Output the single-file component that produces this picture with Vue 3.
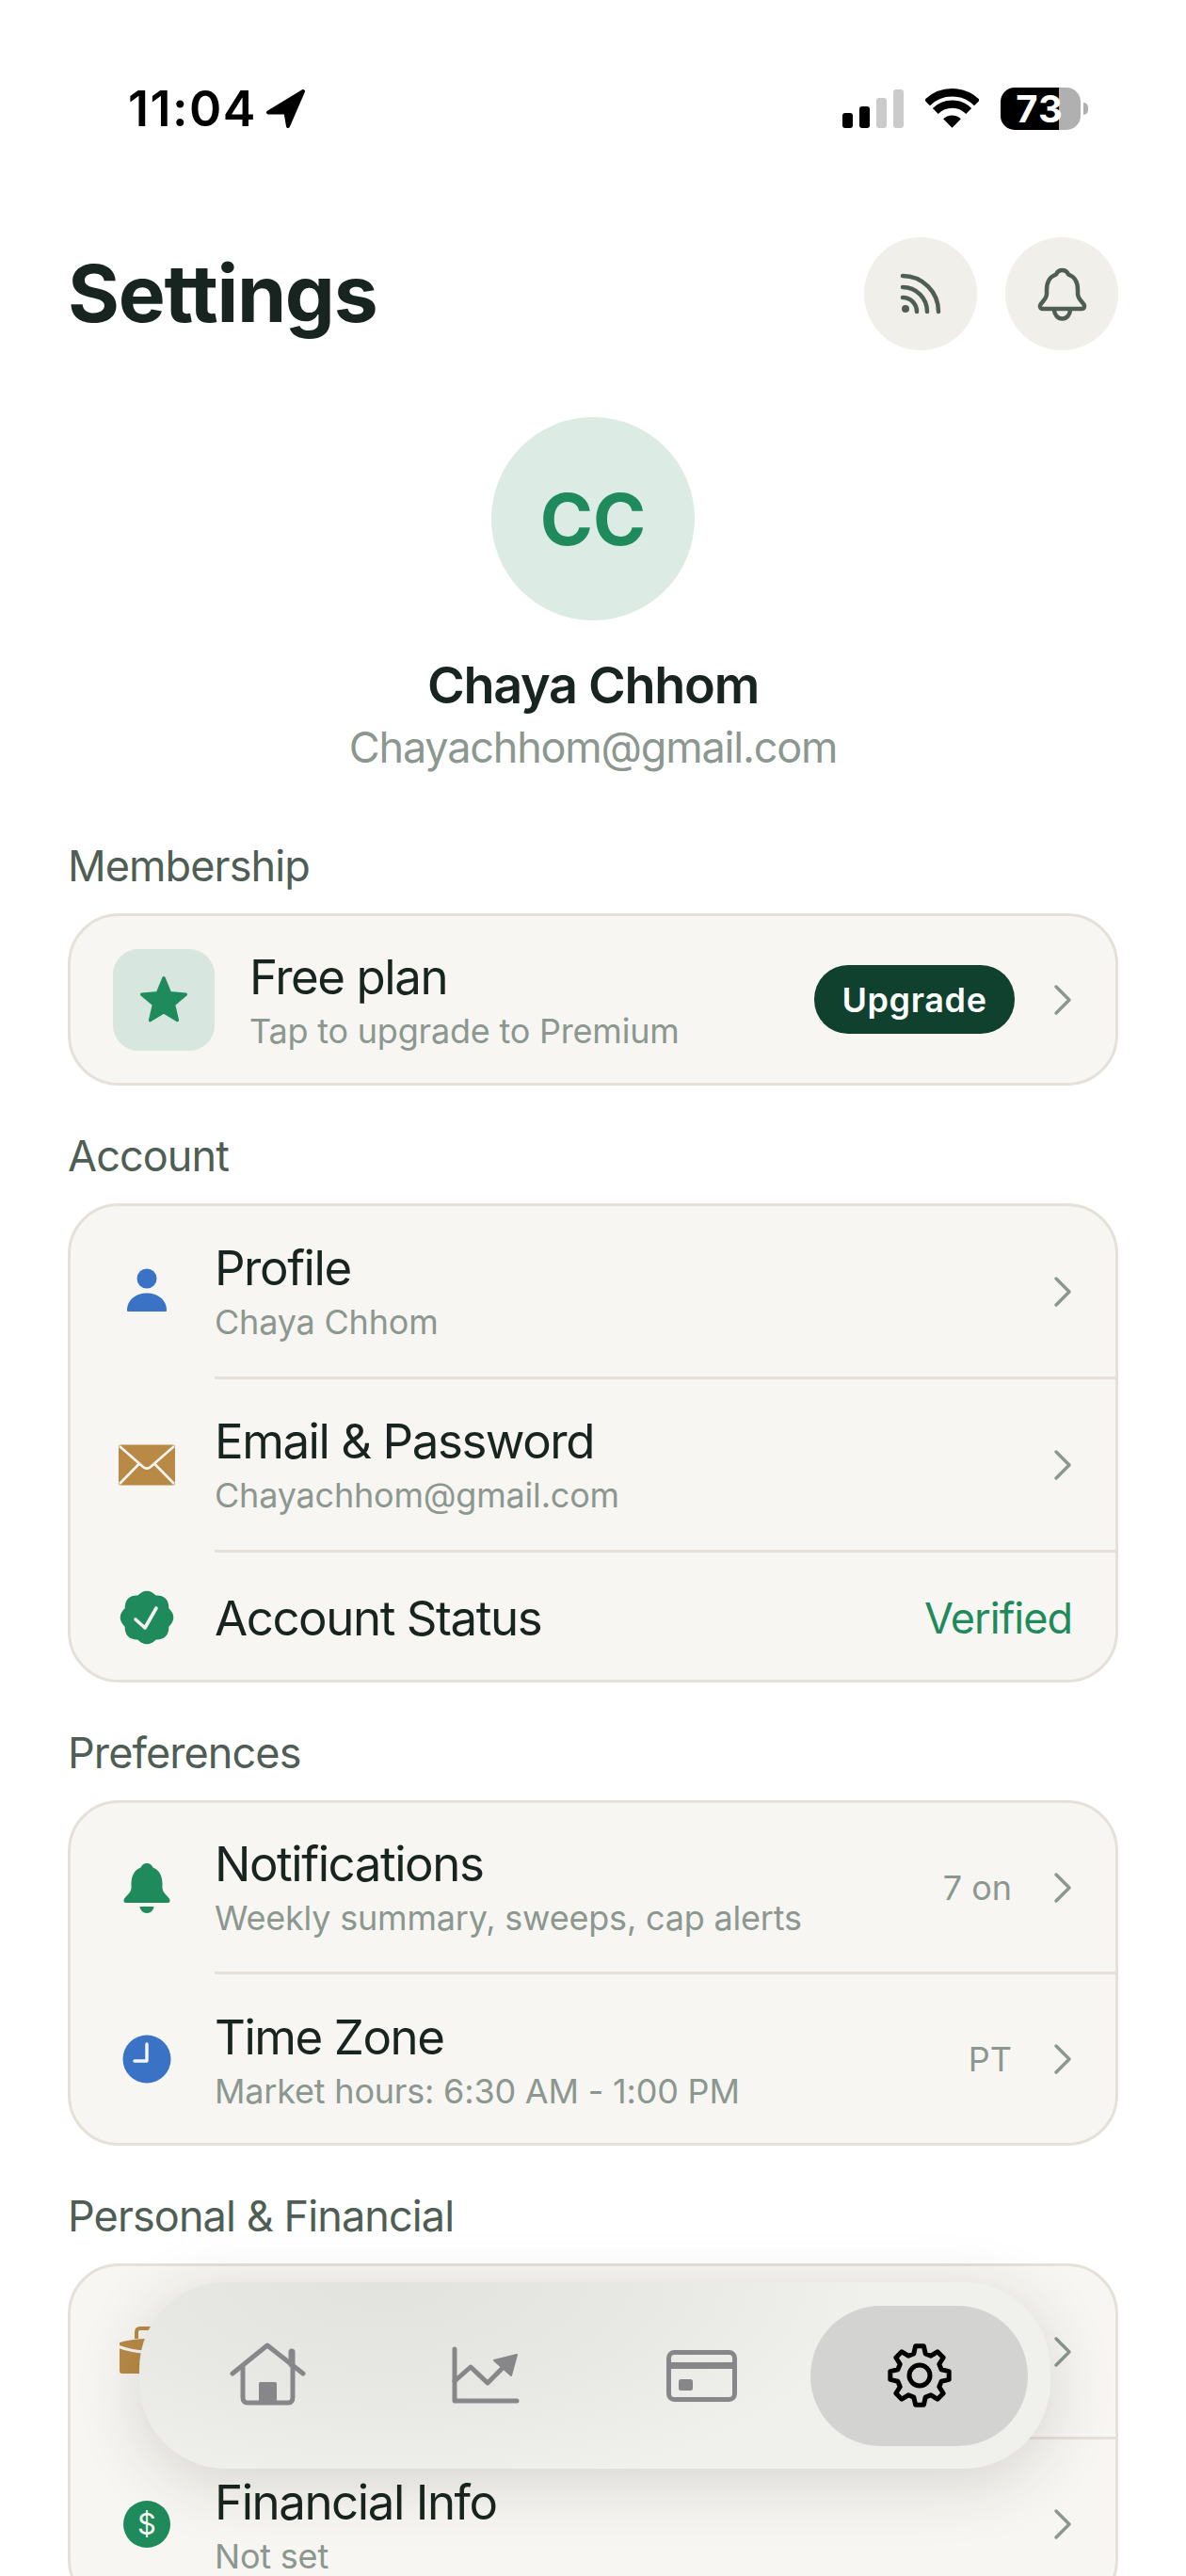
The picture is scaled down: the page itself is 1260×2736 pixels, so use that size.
<script setup>
function rad(deg) {
  return ((deg - 90) * Math.PI) / 180
}
function at(cx, cy, r, deg) {
  return `${(cx + r * Math.cos(rad(deg))).toFixed(2)} ${(cy + r * Math.sin(rad(deg))).toFixed(2)}`
}
function gearPath(cx, cy, R, r, n) {
  const pts = []
  for (let i = 0; i < n; i++) {
    const a = (i * 360) / n
    for (const [d, len] of [[-15, r], [-8, R], [8, R], [15, r]]) {
      pts.push(at(cx, cy, len, a + d))
    }
  }
  return 'M' + pts.join('L') + 'Z'
}
function badgePath(cx, cy, notch, peak, n) {
  const step = 360 / n
  let d = 'M' + at(cx, cy, notch, -step / 2)
  for (let i = 0; i < n; i++) {
    d += `Q${at(cx, cy, peak, i * step)} ${at(cx, cy, notch, i * step + step / 2)}`
  }
  return d + 'Z'
}
const gear = gearPath(45, 45, 31.5, 24, 8)
const badge = badgePath(33, 33, 24.5, 32.5, 8)
</script>

<template>
  <div class="page">
    <div class="status">
      <div class="time-wrap">
        <span class="time">11:04</span>
        <svg class="loc" viewBox="0 0 43 41"><path d="M40 2 3 24.5H21.5L24 39Z" fill="#000" stroke="#000" stroke-width="4" stroke-linejoin="round" /></svg>
      </div>
      <div class="status-right">
        <div class="signal">
          <i class="bar b1"></i><i class="bar b2"></i><i class="bar b3 off"></i><i class="bar b4 off"></i>
        </div>
        <svg class="wifi" viewBox="0 0 57 43" fill="none" stroke="#000" stroke-width="8.4">
          <path d="M2 15.2A37.5 37.5 0 0 1 55 15.2" />
          <path d="M10.8 24A25 25 0 0 1 46.2 24" />
          <path d="M28.5 41.7 19.1 32.3A13.3 13.3 0 0 1 37.9 32.3Z" fill="#000" stroke="none" />
        </svg>
        <div class="battery"><span>73</span></div>
      </div>
    </div>

    <header class="header">
      <h1>Settings</h1>
      <div class="header-btns">
        <button class="round">
          <svg viewBox="0 0 120 120" fill="none" stroke="#4f5e55" stroke-width="4.5" stroke-linecap="round">
            <path d="M41 41A38 38 0 0 1 79 79" />
            <path d="M41 53A26 26 0 0 1 67 79" />
            <path d="M41 64A15 15 0 0 1 56 79" />
            <circle cx="44" cy="76" r="4" fill="#4f5e55" stroke="none" />
          </svg>
        </button>
        <button class="round">
          <svg viewBox="0 0 120 120" fill="none" stroke="#4f5e55" stroke-width="4.5" stroke-linejoin="round">
            <path d="M60.5 35C57.5 35 55 37 54 39.5 47 42 44 48 44 56V60C44 66 38 69 37 72.5 36.7 74.5 37.5 76 39.5 76H81.5C83.5 76 84.3 74.5 84 72.5 83 69 77 66 77 60V56C77 48 74 42 67 39.5 66 37 63.5 35 60.5 35Z" />
            <path d="M52 77A8.5 9.5 0 0 0 69 77" />
          </svg>
        </button>
      </div>
    </header>

    <section class="profile">
      <div class="avatar">CC</div>
      <div class="name">Chaya Chhom</div>
      <div class="email">Chayachhom@gmail.com</div>
    </section>

    <section class="section first">
      <div class="label">Membership</div>
      <div class="card plan">
        <div class="plan-icon">
          <svg viewBox="0 0 54 54"><path d="M27 6 33 20.5 48 21.7 36.5 31.5 40 46.5 27 38.5 14 46.5 17.5 31.5 6 21.7 21 20.5Z" fill="#1f8a5b" stroke="#1f8a5b" stroke-width="3" stroke-linejoin="round" /></svg>
        </div>
        <div class="text">
          <div class="title">Free plan</div>
          <div class="sub">Tap to upgrade to Premium</div>
        </div>
        <span class="upgrade">Upgrade</span>
        <svg class="chev" viewBox="0 0 20 34"><polyline points="3,3 17,17 3,31" /></svg>
      </div>
    </section>

    <section class="section">
      <div class="label">Account</div>
      <div class="card">
        <div class="row">
          <svg class="ico" viewBox="0 0 66 66"><circle cx="33" cy="18" r="10.5" fill="#3a72c6" /><path d="M12 51.5C12 41 21 33.5 33 33.5S54 41 54 51.5C54 52.5 53.5 53 52.5 53H13.5C12.5 53 12 52.5 12 51.5Z" fill="#3a72c6" /></svg>
          <div class="body line tall">
            <div class="text">
              <div class="title">Profile</div>
              <div class="sub">Chaya Chhom</div>
            </div>
            <svg class="chev" viewBox="0 0 20 34"><polyline points="3,3 17,17 3,31" /></svg>
          </div>
        </div>
        <div class="row">
          <svg class="ico" viewBox="0 0 66 66">
            <rect x="3" y="10.5" width="60" height="43" rx="2" fill="#b88a45" />
            <path d="M4 12 29 34C31.5 36 34.5 36 37 34L62 12M4 52 25.5 30M62 52 40.5 30" fill="none" stroke="#f6f5f1" stroke-width="2.6" />
          </svg>
          <div class="body line tall">
            <div class="text">
              <div class="title">Email &amp; Password</div>
              <div class="sub">Chayachhom@gmail.com</div>
            </div>
            <svg class="chev" viewBox="0 0 20 34"><polyline points="3,3 17,17 3,31" /></svg>
          </div>
        </div>
        <div class="row">
          <svg class="ico status-badge" viewBox="0 0 66 66">
            <path :d="badge" fill="#1f8a5b" stroke="#1f8a5b" stroke-width="1.5" stroke-linejoin="round" />
            <path d="M21 35 31 44 43 23" fill="none" stroke="#f6f5f1" stroke-width="3.6" stroke-linecap="round" stroke-linejoin="round" />
          </svg>
          <div class="body short">
            <div class="title">Account Status</div>
            <span class="verified">Verified</span>
          </div>
        </div>
      </div>
    </section>

    <section class="section">
      <div class="label">Preferences</div>
      <div class="card">
        <div class="row">
          <svg class="ico" viewBox="27.5 28 66 66">
            <path d="M60.5 34C57.5 34 55 36 54 38.5 47 41 44 48 44 56V60C44 66 37 69 36 73 35.7 75 36.5 76 38.5 76H82.5C84.5 76 85.3 75 85 73 84 69 77 66 77 60V56C77 48 74 41 67 38.5 66 36 63.5 34 60.5 34Z" fill="#1f8a5b" />
            <path d="M53 80H68C67.5 84 64.5 87 60.5 87S53.5 84 53 80Z" fill="#1f8a5b" />
          </svg>
          <div class="body line tall tight">
            <div class="text">
              <div class="title">Notifications</div>
              <div class="sub">Weekly summary, sweeps, cap alerts</div>
            </div>
            <span class="value">7 on</span>
            <svg class="chev" viewBox="0 0 20 34"><polyline points="3,3 17,17 3,31" /></svg>
          </div>
        </div>
        <div class="row">
          <svg class="ico" viewBox="0 0 66 66">
            <circle cx="33" cy="33" r="25.5" fill="#3a72c6" />
            <path d="M33 17V35H20" fill="none" stroke="#f6f5f1" stroke-width="3.4" stroke-linecap="round" stroke-linejoin="round" />
          </svg>
          <div class="body tall">
            <div class="text">
              <div class="title">Time Zone</div>
              <div class="sub">Market hours: 6:30 AM - 1:00 PM</div>
            </div>
            <span class="value">PT</span>
            <svg class="chev" viewBox="0 0 20 34"><polyline points="3,3 17,17 3,31" /></svg>
          </div>
        </div>
      </div>
    </section>

    <section class="section">
      <div class="label">Personal &amp; Financial</div>
      <div class="card">
        <div class="row">
          <svg class="ico" viewBox="0 0 66 66">
            <path d="M4 22Q33 14 62 22V52C62 55 60 55 58 55H8C6 55 4 55 4 52Z" fill="#b88a45" />
            <path d="M22 18V11C22 8 24 7 26 7H38" fill="none" stroke="#b88a45" stroke-width="4" />
            <path d="M2 26Q33 38 64 26" fill="none" stroke="#f6f5f1" stroke-width="3" />
          </svg>
          <div class="body line tall">
            <div class="text"></div>
            <svg class="chev" viewBox="0 0 20 34"><polyline points="3,3 17,17 3,31" /></svg>
          </div>
        </div>
        <div class="row">
          <div class="dollar">$</div>
          <div class="body tall">
            <div class="text">
              <div class="title">Financial Info</div>
              <div class="sub">Not set</div>
            </div>
            <svg class="chev" viewBox="0 0 20 34"><polyline points="3,3 17,17 3,31" /></svg>
          </div>
        </div>
      </div>
    </section>

    <nav class="nav">
      <div class="nav-item">
        <svg viewBox="0 0 90 90" fill="none" stroke="#87878a" stroke-width="5" stroke-linecap="round" stroke-linejoin="round">
          <path d="M8 43 45 13 83 43" />
          <path d="M19 36V68C19 72 21 74 24 74H67C70 74 72 72 72 68V36" />
          <path d="M71 20V33" stroke-width="7" />
          <rect x="36" y="52" width="19" height="22" rx="1.5" fill="#87878a" stroke="none" />
        </svg>
      </div>
      <div class="nav-item">
        <svg viewBox="0 0 90 90" fill="none" stroke="#87878a" stroke-width="5" stroke-linecap="round" stroke-linejoin="round">
          <path d="M13 17V72H79" />
          <path d="M13 51 30 36 48 53 66 35" />
          <path d="M55 29 79 23 73 45Z" fill="#87878a" stroke-width="2" />
        </svg>
      </div>
      <div class="nav-item">
        <svg viewBox="0 0 90 90" fill="none" stroke="#87878a" stroke-width="5">
          <rect x="9.5" y="20.5" width="70" height="50" rx="6" />
          <rect x="9" y="31" width="71" height="7" fill="#87878a" stroke="none" />
          <rect x="20" y="49" width="15" height="12" rx="2.5" fill="#87878a" stroke="none" />
        </svg>
      </div>
      <div class="nav-item active">
        <svg viewBox="0 0 90 90" fill="none" stroke="#000" stroke-width="5" stroke-linejoin="round">
          <path :d="gear" />
          <circle cx="45" cy="45" r="11" />
        </svg>
      </div>
    </nav>
  </div>
</template>

<style scoped>
.page {
  position: relative;
  width: 1260px;
  height: 2736px;
  overflow: hidden;
  background: #fff;
  font-family: Inter, "Liberation Sans", sans-serif;
  color: #18241f;
}
.status {
  height: 230px;
  display: flex;
  align-items: center;
  justify-content: space-between;
  padding: 0 112px 0 136px;
  box-sizing: border-box;
}
.time-wrap { display: flex; align-items: center; gap: 9px; }
.time { font-size: 52px; font-weight: 600; color: #000; line-height: 60px; letter-spacing: 1.5px; padding-top: 2px; }
.loc { width: 43px; height: 41px; display: block; }
.status-right { display: flex; align-items: center; }
.signal { display: flex; align-items: flex-end; gap: 7px; height: 41px; margin-right: 23px; }
.bar { width: 11px; border-radius: 3px; background: #000; display: block; }
.b1 { height: 16px; }
.b2 { height: 23px; }
.b3 { height: 32px; }
.b4 { height: 41px; }
.off { background: #cbcbcb; }
.wifi { width: 57px; height: 43px; display: block; margin-right: 23px; }
.battery {
  position: relative;
  width: 85px;
  height: 45px;
  border-radius: 15px;
  background: linear-gradient(90deg, #000 73%, #b0b0b0 73%);
  display: flex;
  align-items: center;
  justify-content: center;
  font-size: 40px;
  font-weight: 700;
  color: #fff;
  line-height: 45px;
}
.battery span { margin-right: 2px; letter-spacing: 1px; }
.battery::after {
  content: "";
  position: absolute;
  left: 88px;
  top: 16px;
  width: 5px;
  height: 13px;
  border-radius: 0 7px 7px 0;
  background: #b0b0b0;
}
.header {
  margin-top: 22px;
  padding: 0 72px;
  display: flex;
  align-items: center;
  justify-content: space-between;
  height: 120px;
}
h1 { margin: 0; font-size: 84px; font-weight: 700; line-height: 120px; letter-spacing: -1.3px; }
.header-btns { display: flex; gap: 30px; }
.round {
  width: 120px;
  height: 120px;
  border: 0;
  padding: 0;
  border-radius: 50%;
  background: #f0efea;
  display: block;
}
.round svg { display: block; width: 120px; height: 120px; }
.profile { display: flex; flex-direction: column; align-items: center; margin-top: 71px; }
.avatar {
  width: 216px;
  height: 216px;
  border-radius: 50%;
  background: #dcebe3;
  color: #1f8a5b;
  font-size: 76px;
  font-weight: 700;
  display: flex;
  align-items: center;
  justify-content: center;
}
.name { margin-top: 36px; font-size: 54px; font-weight: 600; line-height: 66px; letter-spacing: -1.3px; }
.email { margin-top: 3px; font-size: 45px; line-height: 60px; color: #8b978f; letter-spacing: -1.2px; }
.section { margin-top: 48px; padding: 0 72px; }
.section.first { margin-top: 69px; }
.label { font-size: 45px; line-height: 54px; color: #4f5e55; margin-bottom: 23px; letter-spacing: -0.9px; }
.card {
  background: #f7f6f2;
  border: 3px solid #e5e1d8;
  border-radius: 54px;
  overflow: hidden;
}
.plan {
  display: flex;
  align-items: center;
  height: 177px;
  padding: 0 46px 0 45px;
}
.plan-icon {
  width: 108px;
  height: 108px;
  border-radius: 27px;
  background: #d7e6de;
  display: flex;
  align-items: center;
  justify-content: center;
  margin-right: 37px;
  flex: none;
}
.plan-icon svg { width: 60px; height: 60px; display: block; }
.plan .text { flex: 1; }
.row { display: flex; align-items: center; padding-left: 48px; }
.ico { width: 66px; height: 66px; flex: none; display: block; }
.status-badge { margin-top: 3px; }
.body {
  flex: 1;
  margin-left: 39px;
  display: flex;
  align-items: center;
  padding-right: 46px;
  box-sizing: border-box;
}
.tall { height: 179px; }
.tall .text { padding-top: 8px; }
.tall.line { height: 184px; }
.tall.line .text { padding-top: 4px; }
.tall.line.tight { height: 182px; }
.short { height: 135px; justify-content: space-between; padding-top: 4px; }
.line { border-bottom: 3px solid #e5e1d8; }
.text { flex: 1; padding-top: 6px; }
.title { font-size: 51px; line-height: 60px; color: #18241f; letter-spacing: -1.45px; }
.sub { font-size: 36px; line-height: 54px; color: #8b978f; letter-spacing: -0.2px; }
.value { font-size: 36px; color: #8b978f; margin-right: 44px; }
.verified { font-size: 45px; color: #1f8a5b; letter-spacing: -1px; }
.chev { width: 20px; height: 34px; flex: none; display: block; fill: none; stroke: #8b978f; stroke-width: 3.5; stroke-linecap: round; stroke-linejoin: round; }
.upgrade {
  width: 213px;
  height: 73px;
  border-radius: 36px;
  background: #10402e;
  color: #fff;
  font-size: 36px;
  font-weight: 600;
  display: flex;
  align-items: center;
  justify-content: center;
  margin-right: 41px;
  letter-spacing: 0.6px;
}
.dollar {
  width: 50px;
  height: 50px;
  margin: 0 8px;
  border-radius: 50%;
  background: #1f8a5b;
  color: #f6f5f1;
  font-size: 31px;
  display: flex;
  align-items: center;
  justify-content: center;
  flex: none;
}
.nav {
  position: absolute;
  left: 148px;
  top: 2424px;
  width: 968px;
  height: 198px;
  box-sizing: border-box;
  border-radius: 92px;
  background: radial-gradient(ellipse 520px 230px at 260px 0, #e2e2df 0%, #e8e8e5 55%, rgba(240, 240, 237, 0) 100%), #f0f0ed;
  box-shadow: 0 14px 70px rgba(40, 40, 30, 0.16);
  display: flex;
  align-items: center;
  padding: 0 24px 0 20px;
}
.nav-item { display: flex; align-items: center; justify-content: center; width: 231px; height: 149px; flex: none; }
.nav-item svg { width: 90px; height: 90px; display: block; }
.active { background: #d3d3d1; border-radius: 75px; }
</style>
